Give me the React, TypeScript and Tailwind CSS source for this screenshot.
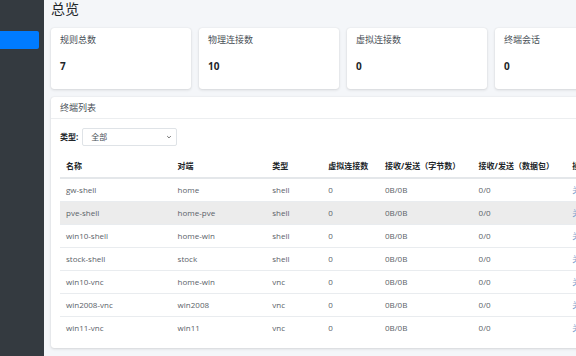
import React from "react";

const font = { fontFamily: '"Open Sans", "Noto Sans CJK SC", sans-serif' };

const stats = [
  { label: "规则总数", value: "7" },
  { label: "物理连接数", value: "10" },
  { label: "虚拟连接数", value: "0" },
  { label: "终端会话", value: "0" },
];

const rows = [
  ["gw-shell", "home", "shell"],
  ["pve-shell", "home-pve", "shell"],
  ["win10-shell", "home-win", "shell"],
  ["stock-shell", "stock", "shell"],
  ["win10-vnc", "home-win", "vnc"],
  ["win2008-vnc", "win2008", "vnc"],
  ["win11-vnc", "win11", "vnc"],
];

const cols = ["w-[112px]", "w-[95px]", "w-[56px]", "w-[57px]", "w-[94px]", "w-[94px]", "w-[60px]"];

export default function App() {
  return (
    <div className="flex h-[356px] w-[576px] overflow-hidden bg-[#f4f6f9]" style={font}>
      <aside className="flex w-[44px] shrink-0 flex-col bg-[#343a40] pt-[31px]">
        <div className="h-[18px] w-[39px] rounded-r-[2px] bg-[#007bff]" />
      </aside>
      <main className="flex min-w-0 flex-1 flex-col pl-[7px]">
        <h1 className="h-[28px] text-[14px] leading-[18px] text-[#212529]">总览</h1>
        <div className="flex gap-[8px]">
          {stats.map((s) => (
            <div
              key={s.label}
              className="h-[61px] w-[140px] shrink-0 rounded-[3px] bg-white px-[9px] pt-[5px] shadow-[0_0_1px_rgba(0,0,0,0.13),0_1px_3px_rgba(0,0,0,0.12)]"
            >
              <div className="text-[9px] leading-[14px] text-[#495057]">{s.label}</div>
              <div className="mt-[12px] text-[10px] font-bold leading-[14px] text-[#212529]">{s.value}</div>
            </div>
          ))}
        </div>
        <section className="mt-[8px] h-[251px] w-[584px] shrink-0 rounded-[3px] bg-white shadow-[0_0_1px_rgba(0,0,0,0.13),0_1px_3px_rgba(0,0,0,0.12)]">
          <div className="flex h-[22px] items-center border-b border-[#eceef0] px-[9px] pt-[1px] text-[9px] text-[#495057]">
            终端列表
          </div>
          <div className="px-[9px] pt-[9px]">
            <div className="flex h-[18px] items-center gap-[4px]">
              <span className="text-[8px] font-bold text-[#212529]">类型:</span>
              <div className="flex h-[18px] w-[95px] items-center justify-between rounded-[2px] border border-[#dfe3e7] pl-[8px] pr-[4px] text-[8px] text-[#495057]">
                <span>全部</span>
                <svg width="6" height="6" viewBox="0 0 10 10" fill="none" stroke="#555" strokeWidth="1.4">
                  <path d="M2 3.5 L5 6.5 L8 3.5" />
                </svg>
              </div>
            </div>
            <table className="mt-[9px] border-collapse text-left text-[8px]">
              <thead>
                <tr className="h-[23px] border-b-[2px] border-[#e4e7ea]">
                  {["名称", "对端", "类型", "虚拟连接数", "接收/发送（字节数）", "接收/发送（数据包）", "操作"].map((h, i) => (
                    <th key={h} className={`${cols[i]} px-[6px] font-bold text-[#212529]`}>
                      {h}
                    </th>
                  ))}
                </tr>
              </thead>
              <tbody>
                {rows.map((r, i) => (
                  <tr
                    key={r[0]}
                    className={`h-[23px] ${i < rows.length - 1 ? "border-b border-[#e9ecef]" : ""} ${i === 1 ? "bg-[#ececec]" : ""} text-[#5a6268]`}
                  >
                    <td className="px-[6px]">{r[0]}</td>
                    <td className="px-[6px]">{r[1]}</td>
                    <td className="px-[6px]">{r[2]}</td>
                    <td className="px-[6px]">0</td>
                    <td className="px-[6px]">0B/0B</td>
                    <td className="px-[6px]">0/0</td>
                    <td className="px-[6px] text-[#7b9ccc]">关闭</td>
                  </tr>
                ))}
              </tbody>
            </table>
          </div>
        </section>
      </main>
    </div>
  );
}
